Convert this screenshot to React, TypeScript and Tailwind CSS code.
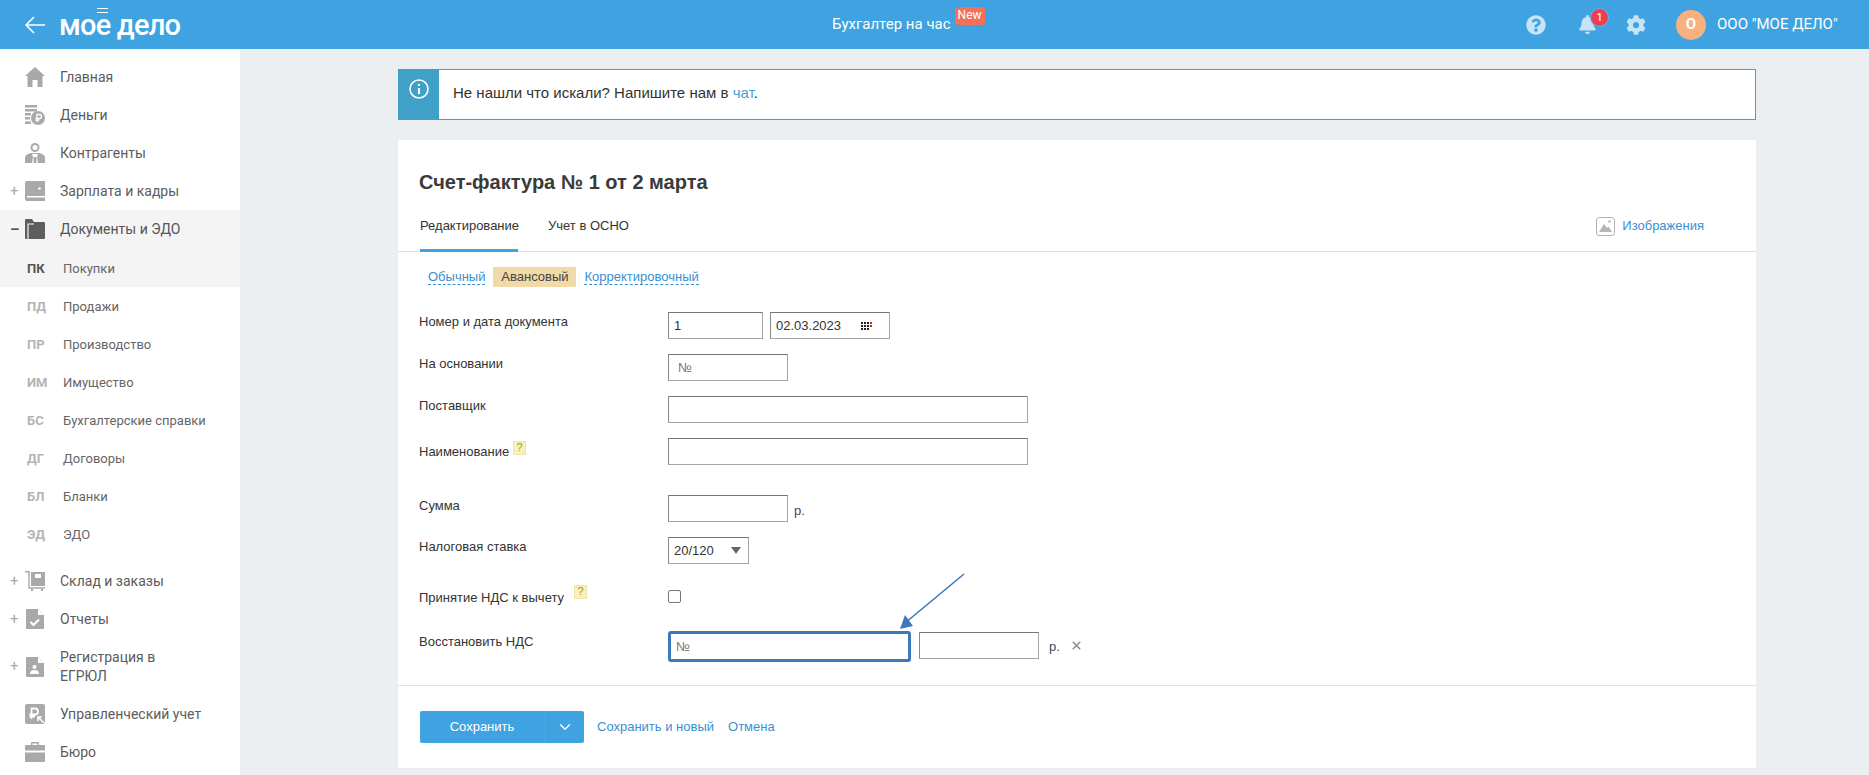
import React from "react";
import { ChevronDown, X } from "lucide-react";
import { FaBell, FaCog, FaQuestionCircle } from "react-icons/fa";

const G = "#a9a9a9";

function HomeIcon() {
  return (
    <svg width="20" height="20" viewBox="0 0 20 20" fill={G}>
      <path d="M10 0 L20 9 H17.5 V20 H12.5 V13 H7.5 V20 H2.5 V9 H0 Z" />
    </svg>
  );
}
function MoneyIcon() {
  return (
    <svg width="20" height="20" viewBox="0 0 20 20" fill={G}>
      <rect x="0" y="0" width="12" height="2.5" />
      <rect x="0" y="4" width="12" height="2.5" />
      <rect x="0" y="8" width="6" height="2.5" />
      <rect x="0" y="12" width="5" height="2.5" />
      <rect x="0" y="16.5" width="6" height="2.5" />
      <circle cx="13" cy="13" r="7" />
      <path d="M12 17V9.5h2.5a2 2 0 0 1 0 4H10.5M10.5 15.2h4" stroke="#fff" strokeWidth="1.3" fill="none" />
    </svg>
  );
}
function PersonIcon() {
  return (
    <svg width="20" height="20" viewBox="0 0 20 20" fill={G}>
      <circle cx="10" cy="4.5" r="3.5" fill="none" stroke={G} strokeWidth="2" />
      <path d="M0 20 V15 Q0 11 6 10 H14 Q20 11 20 15 V20 Z" />
      <path d="M7 11 H13 L12 14 L13 20 H11.5 V14 H8.5 V20 H7 L8 14 Z" fill="#fff" />
    </svg>
  );
}
function WalletIcon() {
  return (
    <svg width="20" height="20" viewBox="0 0 20 20" fill={G}>
      <path d="M0 2 Q0 0 2 0 H20 V15 H2 V16.5 H20 V20 H2 Q0 20 0 18 Z" />
      <circle cx="14.5" cy="7.5" r="1.3" fill="#fff" />
    </svg>
  );
}
function FolderIcon() {
  return (
    <svg width="20" height="20" viewBox="0 0 20 20" fill="#5e5e5e">
      <path d="M0 1 Q0 0 1 0 H7 L9 3 H19 Q20 3 20 4 V19 Q20 20 19 20 H1 Q0 20 0 19 Z" />
      <path d="M3 20 V5 H9" fill="none" stroke="#f4f4f4" strokeWidth="1.2" />
    </svg>
  );
}
function CartIcon() {
  return (
    <svg width="20" height="20" viewBox="0 0 20 20" fill={G}>
      <path d="M0 .7 H4 V17 H20" fill="none" stroke={G} strokeWidth="1.4" />
      <path d="M6 1 H20 V15 H6 Z" />
      <rect x="10" y="3" width="6" height="4" fill="#fff" />
      <circle cx="7" cy="19" r="1.2" />
      <circle cx="17" cy="19" r="1.2" />
    </svg>
  );
}
function ReportIcon() {
  return (
    <svg width="20" height="20" viewBox="0 0 20 20" fill={G}>
      <path d="M1 1 Q1 0 2 0 H13 L19 6 V19 Q19 20 18 20 H2 Q1 20 1 19 Z" />
      <path d="M13 0 V6 H19" fill="#fff" />
      <path d="M5.5 13 L8.5 16 L14 10.5" fill="none" stroke="#fff" strokeWidth="2" />
    </svg>
  );
}
function RegIcon() {
  return (
    <svg width="20" height="20" viewBox="0 0 20 20" fill={G}>
      <path d="M1 1 Q1 0 2 0 H13 L19 6 V19 Q19 20 18 20 H2 Q1 20 1 19 Z" />
      <path d="M13 0 V6 H19" fill="#fff" />
      <circle cx="9.5" cy="10" r="2" fill="#fff" />
      <path d="M5 17 Q5 13 9.5 13 Q14 13 14 17 Z" fill="#fff" />
    </svg>
  );
}
function ManageIcon() {
  return (
    <svg width="20" height="20" viewBox="0 0 20 20" fill={G}>
      <rect x="0" y="0" width="20" height="20" rx="2" />
      <path d="M6.5 15V4.5H10a3 3 0 0 1 0 6H4.5M4.5 12.5H10" fill="none" stroke="#fff" strokeWidth="1.8" />
      <path d="M19 19 L13.5 13.5 M13 17 V13 H17" fill="none" stroke="#fff" strokeWidth="1.5" />
    </svg>
  );
}
function CaseIcon() {
  return (
    <svg width="20" height="20" viewBox="0 0 20 20" fill={G}>
      <path d="M6 3 V1 Q6 0 7 0 H13 Q14 0 14 1 V3 H19 Q20 3 20 4 V8.5 H0 V4 Q0 3 1 3 Z" />
      <path d="M0 10.5 H20 V19 Q20 20 19 20 H1 Q0 20 0 19 Z" />
      <rect x="7.5" y="1.5" width="5" height="1.5" fill="#fff" />
    </svg>
  );
}

function MainItem({
  icon,
  label,
  mark,
  active,
  tall,
}: {
  icon: React.ReactNode;
  label: React.ReactNode;
  mark?: string;
  active?: boolean;
  tall?: boolean;
}) {
  return (
    <div className={`flex items-center ${tall ? "h-[57px] leading-[19px]" : "h-[38px]"} ${active ? "bg-[#f4f4f4]" : ""}`}>
      <span className={`w-[25px] pl-[10px] text-[15px] leading-none ${active ? "font-bold text-[#555]" : "text-[#aaa]"}`}>{mark}</span>
      <span className="w-[35px] shrink-0">{icon}</span>
      <span className={`text-[14px] ${active ? "text-[#555]" : "text-[#5c5c5c]"}`}>{label}</span>
    </div>
  );
}

function SubItem({ code, label, active }: { code: string; label: string; active?: boolean }) {
  return (
    <div className={`flex items-center pt-[2px] pl-[27px] text-[13px] ${active ? "h-[39px] bg-[#f4f4f4]" : "h-[38px]"}`}>
      <span className={`w-[36px] font-bold ${active ? "text-[#555]" : "text-[#b4b4b4]"}`}>{code}</span>
      <span className="text-[#666]">{label}</span>
    </div>
  );
}

function Hint() {
  return (
    <span className="inline-flex items-center justify-center w-[13px] h-[14px] bg-[#f9f2b8] border border-[#efe5a5] text-[#a58f35] text-[11px] leading-none">?</span>
  );
}

const inputCls =
  "h-[27px] border border-[#a5a5a5] border-t-[#767676] border-l-[#8a8a8a] bg-white px-[5px] text-[13px] text-[#333] flex items-center";

function Row({ label, top, children }: { label: React.ReactNode; top: string; children: React.ReactNode }) {
  return (
    <div className={`flex items-start ${top}`}>
      <div className="w-[249px] -ml-[1px] shrink-0 text-[13px] leading-[18px] text-[#333] pt-[1px]">{label}</div>
      <div className="flex items-center">{children}</div>
    </div>
  );
}

export default function App() {
  return (
    <div className="h-screen overflow-hidden flex flex-col bg-[#ebeff2] font-['Liberation_Sans',Arial,sans-serif]">
      {/* header */}
      <header className="h-[49px] shrink-0 bg-[#3ea3e0] flex items-center text-white font-['Roboto',sans-serif]">
        <svg className="ml-[24px]" width="22" height="20" viewBox="0 0 22 20" fill="none" stroke="#fff" strokeWidth="1.6">
          <path d="M21 10 H2 M10 2 L2 10 L10 18" />
        </svg>
        <div className="relative ml-[13px] mt-[1px] text-[29px] leading-none font-medium tracking-[-0.8px] w-[130px]">
          мое дело
          <span className="absolute left-[38px] -top-[3px] w-[11px] h-[5px] border-y border-white" />
        </div>
        <div className="ml-[643px] flex items-center text-[15px] w-[160px]">
          <span>Бухгалтер на час</span>
          <span className="ml-[4px] -mt-[17px] h-[18px] w-[30px] rounded-[3px] bg-[#f47059] text-[12px] leading-[17px] text-center">New</span>
        </div>
        <FaQuestionCircle className="ml-[534px]" size={20} color="#c5e4f8" />
        <div className="relative ml-[32px] w-[26px]">
          <FaBell size={19} color="#c5e4f8" />
          <span className="absolute -top-[6px] left-[13px] w-[17px] h-[17px] rounded-full bg-[#ef3e4f] text-[11px] leading-[17px] text-center ring-1 ring-[#69b2e6]">1</span>
        </div>
        <FaCog className="ml-[22px]" size={20} color="#c5e4f8" />
        <span className="ml-[30px] w-[30px] h-[30px] rounded-full bg-[#f9b07f] text-[15px] font-bold flex items-center justify-center">О</span>
        <span className="ml-[11px] text-[15px]">ООО "МОЕ ДЕЛО"</span>
      </header>

      <div className="flex flex-1 min-h-0">
        {/* sidebar */}
        <aside className="w-[240px] shrink-0 bg-white pt-[9px] font-['Roboto',sans-serif]">
          <MainItem icon={<HomeIcon />} label="Главная" />
          <MainItem icon={<MoneyIcon />} label="Деньги" />
          <MainItem icon={<PersonIcon />} label="Контрагенты" />
          <MainItem icon={<WalletIcon />} label="Зарплата и кадры" mark="+" />
          <MainItem icon={<FolderIcon />} label="Документы и ЭДО" mark="–" active />
          <SubItem code="ПК" label="Покупки" active />
          <SubItem code="ПД" label="Продажи" />
          <SubItem code="ПР" label="Производство" />
          <SubItem code="ИМ" label="Имущество" />
          <SubItem code="БС" label="Бухгалтерские справки" />
          <SubItem code="ДГ" label="Договоры" />
          <SubItem code="БЛ" label="Бланки" />
          <SubItem code="ЭД" label="ЭДО" />
          <div className="h-[9px]" />
          <MainItem icon={<CartIcon />} label="Склад и заказы" mark="+" />
          <MainItem icon={<ReportIcon />} label="Отчеты" mark="+" />
          <MainItem icon={<RegIcon />} label={<>Регистрация в<br />ЕГРЮЛ</>} mark="+" tall />
          <MainItem icon={<ManageIcon />} label="Управленческий учет" />
          <MainItem icon={<CaseIcon />} label="Бюро" />
        </aside>

        {/* content */}
        <main className="ml-[158px] w-[1358px] pt-[20px]">
          <div className="flex h-[51px] border border-[#4a9fc9] bg-white">
            <div className="w-[41px] shrink-0 bg-[#3fa0c8] flex justify-center pt-[10px] -my-[1px] -ml-[1px]">
              <svg width="20" height="20" viewBox="0 0 20 20" fill="none" stroke="#fff" strokeWidth="1.6">
                <circle cx="10" cy="10" r="9" />
                <path d="M10 9 V15 M10 5 V7" strokeWidth="2" />
              </svg>
            </div>
            <div className="pl-[14px] pt-[13px] text-[15px] leading-[20px] text-[#333]">
              Не нашли что искали? Напишите нам в <span className="text-[#4a9ee0]">чат</span>.
            </div>
          </div>

          <div className="mt-[20px] h-[628px] bg-white">
            <h1 className="pl-[21px] pt-[29px] text-[20px] leading-[26px] font-bold text-[#3a3a3a]">Счет-фактура № 1 от 2 марта</h1>
            <div className="mt-[10px] h-[47px] border-b border-[#e0e0e0] flex pl-[22px] text-[#333]">
              <div className="h-[47px] w-[98px] pt-[11px] leading-[20px] border-b-[3px] border-[#3ea3e0] text-[13px] whitespace-nowrap">Редактирование</div>
              <div className="ml-[30px] pt-[11px] leading-[20px] text-[13px]">Учет в ОСНО</div>
              <div className="ml-auto mr-[52px] flex items-center h-[20px] mt-[11px] text-[13px] text-[#3a8fd0]">
                <svg width="19" height="19" viewBox="0 0 19 19" className="mr-[7px]">
                  <rect x=".5" y=".5" width="18" height="18" rx="2.5" fill="#fff" stroke="#b5b5b5" />
                  <path d="M3 15 L8 7 L11 11 L12.5 9.5 L16 15 Z" fill="#b5b5b5" />
                  <circle cx="13.5" cy="4.5" r="1.2" fill="#b5b5b5" />
                </svg>
                Изображения
              </div>
            </div>

            <div className="pl-[22px]">
              <div className="mt-[15px] ml-[8px] flex items-center text-[13px] text-[#3a8fd0] h-[20px]">
                <span className="border-b border-dashed border-[#3a8fd0] leading-[15px]">Обычный</span>
                <span className="ml-[8px] w-[83px] h-[20px] leading-[20px] text-center bg-[#f1d9a8] text-[#444]">Авансовый</span>
                <span className="ml-[8px] border-b border-dashed border-[#3a8fd0] leading-[15px]">Корректировочный</span>
              </div>

              <Row label="Номер и дата документа" top="mt-[25px]">
                <div className={`${inputCls} w-[95px]`}>1</div>
                <div className={`${inputCls} ml-[7px] w-[120px] justify-between pr-[16px]`}>
                  02.03.2023
                  <svg width="12" height="8" viewBox="0 0 12 8" fill="#222">
                    <path d="M0 0h2v2H0zM3 0h2v2H3zM6 0h2v2H6zM0 3h2v2H0zM3 3h2v2H3zM6 3h2v2H6zM0 6h2v2H0zM3 6h2v2H3zM6 6h2v2H6z" />
                    <path d="M9 0h2v2H9zM9 3h2v2H9z" fill="#e21b1b" />
                  </svg>
                </div>
              </Row>
              <Row label="На основании" top="mt-[15px]">
                <div className={`${inputCls} w-[120px] pl-[9px] text-[#777]`}>№</div>
              </Row>
              <Row label="Поставщик" top="mt-[15px]">
                <div className={`${inputCls} w-[360px]`} />
              </Row>
              <Row
                label={
                  <span className="flex items-end -mt-[1px]">
                    Наименование
                    <span className="ml-[4px] mb-[5px]"><Hint /></span>
                  </span>
                }
                top="mt-[15px]"
              >
                <div className={`${inputCls} w-[360px]`} />
              </Row>
              <Row label={<span className="block pt-[1px]">Сумма</span>} top="mt-[30px]">
                <div className={`${inputCls} w-[120px]`} />
                <span className="ml-[6px] mt-[5px] text-[13px] text-[#3a4a5a]">р.</span>
              </Row>
              <Row label="Налоговая ставка" top="mt-[15px]">
                <div className={`${inputCls} w-[81px] justify-between pr-[7px]`}>
                  20/120
                  <svg width="10" height="7" viewBox="0 0 10 7" fill="#666">
                    <path d="M0 0 H10 L5 7 Z" />
                  </svg>
                </div>
              </Row>
              <div className="flex items-start mt-[19px] h-[34px]">
                <div className="w-[249px] -ml-[1px] shrink-0 flex items-start text-[13px] leading-[18px] text-[#333] pt-[6px]">
                  Принятие НДС к вычету
                  <span className="ml-[10px] -mt-[7px]"><Hint /></span>
                </div>
                <div className="mt-[7px] w-[13px] h-[13px] rounded-[2px] border border-[#767676] bg-white" />
              </div>
              <div className="flex items-start mt-[14px] relative">
                <div className="w-[249px] -ml-[1px] shrink-0 text-[13px] leading-[18px] text-[#333] pt-[2px]">Восстановить НДС</div>
                <div className="w-[243px] h-[31px] border-[3px] border-[#3d78b9] rounded-[3px] bg-white flex items-center pl-[5px] text-[13px] text-[#777]">№</div>
                <div className={`${inputCls} ml-[8px] mt-[1px] w-[120px]`} />
                <span className="ml-[10px] mt-[6px] text-[13px] text-[#3a4a5a]">р.</span>
                <X className="ml-[10px] mt-[8px]" size={13} color="#909090" strokeWidth={3} />
                <svg className="absolute left-[477px] -top-[59px]" width="70" height="60" viewBox="0 0 70 60" fill="none">
                  <path d="M67 2 L8 51" stroke="#3d78b9" strokeWidth="1.6" />
                  <path d="M3 57 L8 43 L16 54 Z" fill="#3d78b9" />
                </svg>
              </div>
            </div>

            <div className="mt-[23px] border-t border-[#e0e0e0] pl-[22px] pt-[25px] flex items-center text-[13px]">
              <div className="w-[164px] h-[32px] bg-[#3ea3e0] rounded-[2px] text-white flex items-center">
                <span className="w-[124px] text-center">Сохранить</span>
                <span className="w-[40px] h-[32px] border-l border-[#47a7e1] flex items-center justify-center">
                  <ChevronDown size={18} color="#fff" strokeWidth={1.8} />
                </span>
              </div>
              <span className="ml-[13px] text-[#3a8fd0]">Сохранить и новый</span>
              <span className="ml-[14px] text-[#3a8fd0]">Отмена</span>
            </div>
          </div>
        </main>
      </div>
    </div>
  );
}
